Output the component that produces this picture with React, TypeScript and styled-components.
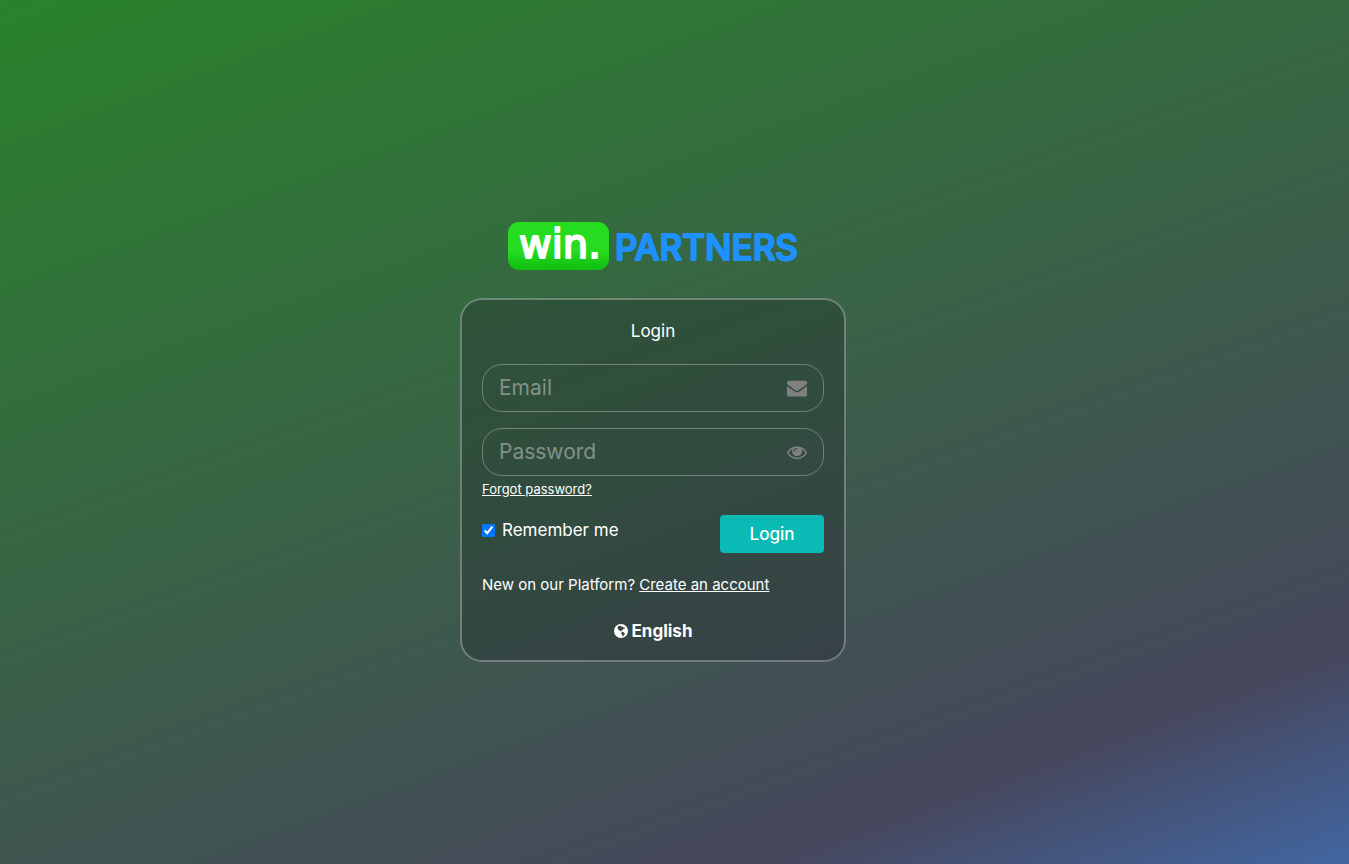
import React, { useState } from "react";
import styled, { createGlobalStyle } from "styled-components";

const GlobalStyle = createGlobalStyle`
  *, *::before, *::after { box-sizing: border-box; }
  body {
    margin: 0;
    font-family: Inter, "Liberation Sans", sans-serif;
    font-size: 17px;
    line-height: 24px;
    color: #fff;
  }
`;

const Page = styled.div`
  min-height: 100vh;
  padding: 20px 43px 0 0;
  display: flex;
  align-items: center;
  justify-content: center;
  background: linear-gradient(160deg, #29832b 0%, #46475c 84%, #4266a2 100%);
`;

const Main = styled.main`
  width: 100%;
  max-width: 386px;
  display: flex;
  flex-direction: column;
  gap: 28px;
`;

const Logo = styled.svg`
  display: block;
  width: 292px;
  height: 48px;
  margin: 0 auto;
  overflow: visible;
`;

const Card = styled.form`
  padding: 19px 20px 17px;
  border: 2px solid rgba(255, 255, 255, 0.3);
  border-radius: 22px;
  background: rgba(30, 34, 40, 0.3);
`;

const Title = styled.h1`
  margin: 0 0 21px;
  font-size: 17px;
  font-weight: 400;
  line-height: 24px;
  text-align: center;
`;

const Field = styled.label`
  display: flex;
  align-items: center;
  height: 48px;
  padding: 0 16px;
  border: 1px solid rgba(255, 255, 255, 0.3);
  border-radius: 20px;
  color: #7f807f;

  & + & { margin-top: 16px; }
`;

const FieldInput = styled.input`
  flex: 1;
  min-width: 0;
  padding: 0;
  border: 0;
  outline: 0;
  background: transparent;
  color: #fff;
  font: 400 21px/24px Inter, "Liberation Sans", sans-serif;

  &::placeholder { color: #82928a; opacity: 1; }
`;

const EyeButton = styled.button`
  display: flex;
  padding: 0;
  border: 0;
  background: none;
  color: inherit;
  cursor: pointer;
`;

const FieldIcon = styled.svg`
  width: 20px;
  height: 20px;
  fill: currentColor;
`;

const Link = styled.a`
  color: inherit;
  text-decoration: underline;
`;

const Forgot = styled.p`
  margin: 3px 0 16px;
  font-size: 13px;
  line-height: 20px;
`;

const Actions = styled.div`
  display: flex;
  justify-content: space-between;
  align-items: flex-start;
`;

const Remember = styled.label`
  display: flex;
  align-items: center;
  gap: 7px;
  padding-top: 3px;
`;

const Checkbox = styled.input`
  width: 13px;
  height: 13px;
  margin: 0;
  accent-color: #0075ff;
`;

const Submit = styled.button`
  width: 104px;
  height: 38px;
  padding: 0;
  border: 0;
  border-radius: 4px;
  background: #0abab5;
  color: #fff;
  font: 500 17px/24px Inter, "Liberation Sans", sans-serif;
  cursor: pointer;
`;

const SignUp = styled.p`
  margin: 20px 0 22px;
  font-size: 15px;
  line-height: 24px;
`;

const Language = styled.button`
  display: flex;
  align-items: center;
  gap: 4px;
  margin: 0 auto;
  padding: 0;
  border: 0;
  background: none;
  color: #fff;
  font: 700 17px/24px Inter, "Liberation Sans", sans-serif;
  cursor: pointer;
`;

const GlobeIcon = styled.svg`
  width: 14px;
  height: 14px;
  fill: currentColor;
`;

const ENVELOPE =
  "M1792 710v794q0 66-47 113t-113 47h-1472q-66 0-113-47t-47-113v-794q44 49 101 87 362 246 497 345 57 42 92.5 65.5t94.5 48 110 24.5h2q51 0 110-24.5t94.5-48 92.5-65.5q170-123 498-345 57-39 100-87zm0-294q0 79-49 151t-122 123q-376 261-468 325-10 7-42.5 31t-54 38.5-52 32.5-57.5 27-50 9h-2q-23 0-50-9t-57.5-27-52-32.5-54-38.5-42.5-31q-91-64-262-182.5t-205-142.5q-62-42-117-115.5t-55-136.5q0-78 41.5-130t118.5-52h1472q65 0 112.5 47t47.5 113z";
const EYE =
  "M1664 960q-152-236-381-353 61 104 61 225 0 185-131.5 316.5t-316.5 131.5-316.5-131.5-131.5-316.5q0-121 61-225-229 117-381 353 133 205 333.5 326.5t434.5 121.5 434.5-121.5 333.5-326.5zm-720-384q0-20-14-34t-34-14q-125 0-214.5 89.5t-89.5 214.5q0 20 14 34t34 14 34-14 14-34q0-86 61-147t147-61q20 0 34-14t14-34zm848 384q0 34-20 69-140 230-376.5 368.5t-499.5 138.5-499.5-139-376.5-368q-20-35-20-69t20-69q140-229 376.5-368t499.5-139 499.5 139 376.5 368q20 35 20 69z";
const GLOBE =
  "M7 0a7 7 0 1 1 0 14a7 7 0 1 1 0-14zM4.2 2.2L3.4 3.8L4.2 5.4L5.6 6.6L7 7.4L7.6 6.4L8.6 6L9.6 4.8L11 4.4L10.2 3L8.8 3.6L8.6 2.4L7 2.6L6.4 1.6zM7.6 8.2L7.2 9.6L8.2 10.8L8.4 12.6L9.6 11.8L11 9.8L10 8.6L8.6 7.8z";

const BrandLogo = () => (
  <Logo viewBox="0 0 292 48" role="img" aria-label="win. PARTNERS">
    <defs>
      <linearGradient id="badge" x1="0" y1="0" x2="0" y2="1">
        <stop offset="0.6" stopColor="#25dc20" />
        <stop offset="1" stopColor="#10bd10" />
      </linearGradient>
    </defs>
    <rect x="1" width="101" height="48" rx="11" fill="url(#badge)" />
    <g strokeLinejoin="round" strokeLinecap="round" strokeWidth="2">
      <text x="12" y="36" fontFamily='"DejaVu Sans", sans-serif' fontSize="40" fill="#fff" stroke="#fff">win.</text>
      <text x="108" y="38" fontFamily="Inter, sans-serif" fontSize="35" fontWeight="500" fill="#1e90ff" stroke="#1e90ff">PARTNERS</text>
    </g>
  </Logo>
);

export default function App() {
  const [visible, setVisible] = useState(false);
  return (
    <>
      <GlobalStyle />
      <Page>
        <Main>
          <BrandLogo />
          <Card onSubmit={(e) => e.preventDefault()}>
            <Title>Login</Title>
            <Field>
              <FieldInput type="email" placeholder="Email" aria-label="Email" />
              <FieldIcon viewBox="0 0 1792 1792" aria-hidden="true"><path d={ENVELOPE} /></FieldIcon>
            </Field>
            <Field>
              <FieldInput type={visible ? "text" : "password"} placeholder="Password" aria-label="Password" />
              <EyeButton type="button" aria-label="Show password" onClick={() => setVisible(!visible)}>
                <FieldIcon viewBox="0 0 1792 1792" aria-hidden="true"><path d={EYE} /></FieldIcon>
              </EyeButton>
            </Field>
            <Forgot><Link href="#forgot">Forgot password?</Link></Forgot>
            <Actions>
              <Remember>
                <Checkbox type="checkbox" defaultChecked />
                Remember me
              </Remember>
              <Submit type="submit">Login</Submit>
            </Actions>
            <SignUp>New on our Platform? <Link href="#register">Create an account</Link></SignUp>
            <Language type="button">
              <GlobeIcon viewBox="0 0 14 14" aria-hidden="true"><path fillRule="evenodd" d={GLOBE} /></GlobeIcon>
              English
            </Language>
          </Card>
        </Main>
      </Page>
    </>
  );
}
